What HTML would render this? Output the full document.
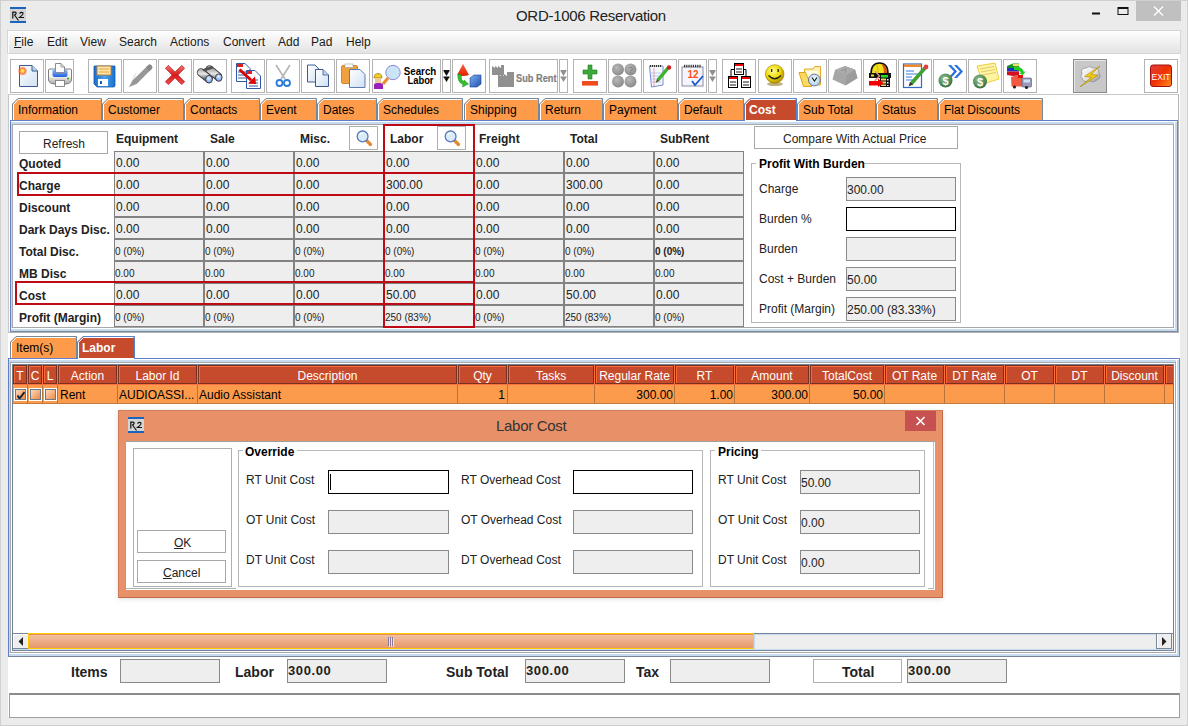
<!DOCTYPE html><html><head><meta charset="utf-8"><style>
*{margin:0;padding:0;box-sizing:border-box}
html,body{width:1188px;height:726px;overflow:hidden}
body{position:relative;background:#ebebeb;font-family:"Liberation Sans",sans-serif;font-size:12px;color:#000}
body div{position:absolute}
.t{white-space:nowrap;line-height:14px}
.b{font-weight:bold}
.tab{height:22px;background:#fa9a4a;border:1px solid #7d8ea6;border-bottom:none;}
</style></head><body>
<div style="left:0px;top:0px;width:1188px;height:726px;border:1px solid #cfcfcf;background:#ebebeb"></div>
<div class="t" style="left:516px;top:7px;font-size:15px;line-height:18px;letter-spacing:-0.3px;color:#222">ORD-1006 Reservation</div>
<div style="left:8px;top:30px;width:1172px;height:687px;background:#fff"></div>
<div style="left:7px;top:30px;width:1174px;height:24px;background:linear-gradient(#fefefe,#e3e3e3);border:1px solid #d6d6d6;box-shadow:inset 1px 1px 0 #fff"></div>
<div class="t" style="left:14px;top:35px;color:#1a1a1a"><u>F</u>ile</div>
<div class="t" style="left:47px;top:35px;color:#1a1a1a">Edit</div>
<div class="t" style="left:80px;top:35px;color:#1a1a1a">View</div>
<div class="t" style="left:119px;top:35px;color:#1a1a1a">Search</div>
<div class="t" style="left:170px;top:35px;color:#1a1a1a">Actions</div>
<div class="t" style="left:223px;top:35px;color:#1a1a1a">Convert</div>
<div class="t" style="left:278px;top:35px;color:#1a1a1a">Add</div>
<div class="t" style="left:311px;top:35px;color:#1a1a1a">Pad</div>
<div class="t" style="left:346px;top:35px;color:#1a1a1a">Help</div>
<div style="left:10px;top:59px;width:34px;height:34px;border:1px solid #b4b4b4;background:#fff"></div>
<div style="left:45px;top:59px;width:29px;height:34px;border:1px solid #b4b4b4;background:#fff"></div>
<div style="left:88px;top:59px;width:34px;height:34px;border:1px solid #b4b4b4;background:#fff"></div>
<div style="left:123px;top:59px;width:34px;height:34px;border:1px solid #b4b4b4;background:#fff"></div>
<div style="left:158px;top:59px;width:34px;height:34px;border:1px solid #b4b4b4;background:#fff"></div>
<div style="left:193px;top:59px;width:34px;height:34px;border:1px solid #b4b4b4;background:#fff"></div>
<div style="left:231px;top:59px;width:34px;height:34px;border:1px solid #b4b4b4;background:#fff"></div>
<div style="left:266px;top:59px;width:34px;height:34px;border:1px solid #b4b4b4;background:#fff"></div>
<div style="left:301px;top:59px;width:34px;height:34px;border:1px solid #b4b4b4;background:#fff"></div>
<div style="left:336px;top:59px;width:34px;height:34px;border:1px solid #b4b4b4;background:#fff"></div>
<div style="left:372px;top:59px;width:69px;height:34px;border:1px solid #b4b4b4;background:#fff"></div>
<div style="left:442px;top:59px;width:9px;height:34px;border:1px solid #b4b4b4;background:#fff"></div>
<div style="left:452px;top:59px;width:34px;height:34px;border:1px solid #b4b4b4;background:#fff"></div>
<div style="left:489px;top:59px;width:69px;height:34px;border:1px solid #b4b4b4;background:#fff"></div>
<div style="left:559px;top:59px;width:9px;height:34px;border:1px solid #b4b4b4;background:#fff"></div>
<div style="left:573px;top:59px;width:34px;height:34px;border:1px solid #b4b4b4;background:#fff"></div>
<div style="left:608px;top:59px;width:34px;height:34px;border:1px solid #b4b4b4;background:#fff"></div>
<div style="left:643px;top:59px;width:34px;height:34px;border:1px solid #b4b4b4;background:#fff"></div>
<div style="left:678px;top:59px;width:29px;height:34px;border:1px solid #b4b4b4;background:#fff"></div>
<div style="left:708px;top:59px;width:9px;height:34px;border:1px solid #b4b4b4;background:#fff"></div>
<div style="left:722px;top:59px;width:34px;height:34px;border:1px solid #b4b4b4;background:#fff"></div>
<div style="left:758px;top:59px;width:34px;height:34px;border:1px solid #b4b4b4;background:#fff"></div>
<div style="left:793px;top:59px;width:34px;height:34px;border:1px solid #b4b4b4;background:#fff"></div>
<div style="left:828px;top:59px;width:34px;height:34px;border:1px solid #b4b4b4;background:#fff"></div>
<div style="left:863px;top:59px;width:34px;height:34px;border:1px solid #b4b4b4;background:#fff"></div>
<div style="left:898px;top:59px;width:34px;height:34px;border:1px solid #b4b4b4;background:#fff"></div>
<div style="left:933px;top:59px;width:34px;height:34px;border:1px solid #b4b4b4;background:#fff"></div>
<div style="left:968px;top:59px;width:34px;height:34px;border:1px solid #b4b4b4;background:#fff"></div>
<div style="left:1003px;top:59px;width:34px;height:34px;border:1px solid #b4b4b4;background:#fff"></div>
<div style="left:1073px;top:59px;width:34px;height:34px;border:1px solid #8a8a8a;background:#c8c8c8;box-shadow:inset 1px 1px 0 #e8e8e8"></div>
<div style="left:1144px;top:59px;width:34px;height:34px;border:1px solid #b4b4b4;background:#fff"></div>
<svg style="position:absolute;left:0;top:0" width="1188" height="96" viewBox="0 0 1188 96">
<defs>
<linearGradient id="pg" x1="0" y1="0" x2="1" y2="1"><stop offset="0" stop-color="#ffffff"/><stop offset="1" stop-color="#cfe0f3"/></linearGradient>
<radialGradient id="star" cx="0.5" cy="0.5" r="0.5"><stop offset="0" stop-color="#ffe040"/><stop offset="0.5" stop-color="#ff8020"/><stop offset="1" stop-color="#ff4040" stop-opacity="0.2"/></radialGradient>
<linearGradient id="redx" x1="0" y1="0" x2="0" y2="1"><stop offset="0" stop-color="#f07a7a"/><stop offset="0.5" stop-color="#d81818"/><stop offset="1" stop-color="#f05050"/></linearGradient>
<linearGradient id="flop" x1="0" y1="0" x2="1" y2="0"><stop offset="0" stop-color="#1a6fd0"/><stop offset="0.5" stop-color="#4aa0ec"/><stop offset="1" stop-color="#1a70cc"/></linearGradient>
<radialGradient id="smile" cx="0.4" cy="0.35" r="0.65"><stop offset="0" stop-color="#ffff90"/><stop offset="0.6" stop-color="#f0d800"/><stop offset="1" stop-color="#b09000"/></radialGradient>
<radialGradient id="coin" cx="0.4" cy="0.35" r="0.7"><stop offset="0" stop-color="#8fc08f"/><stop offset="1" stop-color="#2f6f3a"/></radialGradient>
<linearGradient id="exitg" x1="0" y1="0" x2="1" y2="1"><stop offset="0" stop-color="#e04040"/><stop offset="0.5" stop-color="#f03000"/><stop offset="1" stop-color="#ff9020"/></linearGradient>
<radialGradient id="gcirc" cx="0.4" cy="0.35" r="0.7"><stop offset="0" stop-color="#b8b8b8"/><stop offset="1" stop-color="#888"/></radialGradient>
<linearGradient id="prb" x1="0" y1="0" x2="0" y2="1"><stop offset="0" stop-color="#ffffff"/><stop offset="0.5" stop-color="#f4f0ea"/><stop offset="1" stop-color="#a8a8a8"/></linearGradient>
<linearGradient id="prt" x1="0" y1="0" x2="0" y2="1"><stop offset="0" stop-color="#90c0ff"/><stop offset="1" stop-color="#1a60e0"/></linearGradient>
<linearGradient id="bin" x1="0" y1="0" x2="0" y2="1"><stop offset="0" stop-color="#b0b0b0"/><stop offset="0.5" stop-color="#e8e8e8"/><stop offset="1" stop-color="#707070"/></linearGradient>
<radialGradient id="lens" cx="0.45" cy="0.35" r="0.65"><stop offset="0" stop-color="#e8f2ff"/><stop offset="0.5" stop-color="#a8c8f8"/><stop offset="1" stop-color="#6898e0"/></radialGradient>
<linearGradient id="cloud" x1="0" y1="0" x2="1" y2="1"><stop offset="0" stop-color="#ffffff"/><stop offset="0.55" stop-color="#e4e4e4"/><stop offset="1" stop-color="#8a8a8a"/></linearGradient>
<radialGradient id="clk" cx="0.45" cy="0.4" r="0.6"><stop offset="0" stop-color="#f4fbff"/><stop offset="1" stop-color="#a8d4f0"/></radialGradient>
<linearGradient id="cube" x1="0" y1="0" x2="1" y2="1"><stop offset="0" stop-color="#7ab0f0"/><stop offset="1" stop-color="#2050b0"/></linearGradient>
<linearGradient id="cone" x1="0" y1="0" x2="0" y2="1"><stop offset="0" stop-color="#ff6040"/><stop offset="1" stop-color="#e02000"/></linearGradient>
</defs>
<path d="M19.5 65.5 H32 L37.5 71 V86.5 H19.5 Z" fill="url(#pg)" stroke="#3c5a92" stroke-width="1"/>
<path d="M32 65.5 V71 H37.5" fill="#bcd4ee" stroke="#3c5a92" stroke-width="1"/>
<circle cx="22.5" cy="71" r="4.6" fill="url(#star)"/><circle cx="22.5" cy="71" r="2" fill="#ffe060"/>
<path d="M48.5 70 Q48.5 69 50 69 H70 Q71.5 69 71.5 70 V79 Q71.5 83.5 66 84 H54 Q48.5 83.5 48.5 79 Z" fill="url(#prb)" stroke="#707070" stroke-width="0.9"/>
<path d="M52.5 69.5 H67.5 V74.5 Q67.5 77 65 77 H55 Q52.5 77 52.5 74.5 Z" fill="url(#prt)"/>
<path d="M55.5 63.5 H61 L64.5 67 V72.5 H55.5 Z" fill="#fff" stroke="#808080" stroke-width="0.9"/>
<path d="M61 63.5 V67 H64.5" fill="none" stroke="#808080" stroke-width="0.8"/>
<rect x="55" y="72" width="10" height="1.5" fill="#8a8aa0"/>
<rect x="55.5" y="80.5" width="9" height="6" fill="#fff" stroke="#808080" stroke-width="0.9"/>
<circle cx="68" cy="78.5" r="1" fill="#20a020"/>
<path d="M94 66 H115 V85.5 Q115 87 113.5 87 H97 L94 84 Z" fill="url(#flop)" stroke="#1a5cb0" stroke-width="0.8"/>
<rect x="97" y="66" width="14" height="9" fill="#fbe6b0" stroke="#b8803a" stroke-width="1"/>
<line x1="99" y1="69" x2="109" y2="69" stroke="#f0a030" stroke-width="1"/><line x1="99" y1="72" x2="109" y2="72" stroke="#f0a030" stroke-width="1"/>
<rect x="98" y="79" width="10" height="7" fill="#fff"/><rect x="100" y="81" width="2" height="3" fill="#1a60c0"/>
<path d="M131 84 Q132 75 137 71 L135 79 Z" fill="#ececec"/>
<g transform="translate(-0.7 0.7)"><path d="M148.6 64.7 Q150.5 63 152.3 64.8 Q154 66.8 152.3 68.3 L137.3 83.3 L129.6 86.4 L133.2 79.9 Z" fill="#979797"/>
<path d="M148.6 64.7 Q150.5 63 152.3 64.8 Q154 66.8 152.3 68.3 L150.3 70.3 L146.6 66.7 Z" fill="#8a8a8a"/></g>
<path d="M166.5 69 L169 66.5 L175 72.5 L181 66.5 L183.5 69 L177.5 75 L183.5 81 L181 83.5 L175 77.5 L169 83.5 L166.5 81 L172.5 75 Z" fill="url(#redx)" stroke="#c02020" stroke-width="0.8" transform="translate(175 75) scale(1.12) translate(-175 -75)"/>
<path d="M201 72.5 L208.5 78.5 M209.5 69.5 L218 76.5" stroke="#3a3a3a" stroke-width="8.4" stroke-linecap="round"/>
<path d="M201 72.5 L208.5 78.5 M209.5 69.5 L218 76.5" stroke="url(#bin)" stroke-width="6.6" stroke-linecap="round"/>
<path d="M204 70 L212 67.5" stroke="#505050" stroke-width="2.5" stroke-linecap="round"/>
<ellipse cx="209" cy="79.3" rx="3.4" ry="3.8" fill="url(#lens)" stroke="#333" stroke-width="0.9"/>
<ellipse cx="218.8" cy="77.6" rx="3.3" ry="3.7" fill="url(#lens)" stroke="#333" stroke-width="0.9"/>
<path d="M236.5 63.5 H245 L250 68.5 V81.5 H236.5 Z" fill="#fff" stroke="#2f5aa8" stroke-width="1"/>
<rect x="237" y="64" width="6" height="3" fill="#e02020"/>
<line x1="238" y1="72" x2="246" y2="72" stroke="#2f5aa8"/><line x1="238" y1="75" x2="246" y2="75" stroke="#2f5aa8"/><line x1="238" y1="78" x2="246" y2="78" stroke="#2f5aa8"/>
<path d="M246.5 70.5 H255 L260.5 76 V88.5 H246.5 Z" fill="#fff" stroke="#2f5aa8" stroke-width="1"/>
<rect x="247" y="71" width="5" height="3" fill="#e02020"/>
<line x1="249" y1="80" x2="258" y2="80" stroke="#2f5aa8"/><line x1="249" y1="83" x2="258" y2="83" stroke="#2f5aa8"/><line x1="249" y1="86" x2="258" y2="86" stroke="#2f5aa8"/>
<line x1="239.5" y1="69.5" x2="251" y2="80" stroke="#e00000" stroke-width="3"/><path d="M248 83.5 L256 84 L255 76.5 Z" fill="#e00000"/>
<path d="M276 65 L285 79 M290 65 L281 79" stroke="#b8b8b8" stroke-width="1.8" fill="none"/>
<circle cx="279.5" cy="83" r="3" fill="none" stroke="#2a7ad8" stroke-width="1.8"/><circle cx="287" cy="83" r="3" fill="none" stroke="#2a7ad8" stroke-width="1.8"/>
<path d="M307.5 65 H315 L320.5 70.5 V82 H307.5 Z" fill="url(#pg)" stroke="#3c5a92" stroke-width="1"/>
<path d="M315.5 69.5 H323 L328.5 75 V86.5 H315.5 Z" fill="url(#pg)" stroke="#3c5a92" stroke-width="1"/>
<path d="M323 69.5 V75 H328.5" fill="#bcd4ee" stroke="#3c5a92" stroke-width="0.8"/>
<rect x="341.5" y="65.5" width="16" height="18" rx="1.5" fill="#f0a040" stroke="#c07820" stroke-width="0.8"/>
<rect x="345" y="64" width="8" height="3.5" fill="#fff" stroke="#999" stroke-width="0.6"/>
<path d="M349.5 69.5 H360 L365 74.5 V87.5 H349.5 Z" fill="url(#pg)" stroke="#5a7ab2" stroke-width="1"/>
<circle cx="393" cy="72.5" r="7.2" fill="#c8e4f6" stroke="#8a8ad8" stroke-width="1"/>
<line x1="388" y1="78" x2="383" y2="84" stroke="#f08a30" stroke-width="3"/>
<path d="M374 78 Q374 73.5 378 73.5 Q382 73.5 382 78 Z" fill="#f0d020" stroke="#806000" stroke-width="0.6"/>
<rect x="375" y="78" width="6" height="5" fill="#f0c8a0"/>
<path d="M374 89 V85 Q374 83 377 83 H380 Q383 83 383 85 V89 Z" fill="#9a20b8"/>
<text x="420" y="75" text-anchor="middle" font-family="Liberation Sans" font-weight="bold" font-size="10" textLength="32.5" lengthAdjust="spacingAndGlyphs">Search</text>
<text x="420.5" y="84" text-anchor="middle" font-family="Liberation Sans" font-weight="bold" font-size="10" textLength="26" lengthAdjust="spacingAndGlyphs">Labor</text>
<path d="M443.5 71 H449.5 L446.5 76 Z" fill="#111"/><rect x="443.5" y="70" width="6" height="1" fill="#111"/><path d="M443.5 77 H449.5 L446.5 82 Z" fill="#111"/><rect x="443.5" y="76.5" width="6" height="1" fill="#111"/>
<path d="M560.5 71 H566.5 L563.5 76 Z" fill="#909090"/><rect x="560.5" y="70" width="6" height="1" fill="#909090"/><path d="M560.5 77 H566.5 L563.5 82 Z" fill="#909090"/><rect x="560.5" y="76.5" width="6" height="1" fill="#909090"/>
<path d="M709.5 71 H715.5 L712.5 76 Z" fill="#909090"/><rect x="709.5" y="70" width="6" height="1" fill="#909090"/><path d="M709.5 77 H715.5 L712.5 82 Z" fill="#909090"/><rect x="709.5" y="76.5" width="6" height="1" fill="#909090"/>
<path d="M463 64 L457 75 Q463 77 469 75 Z" fill="url(#cone)"/>
<path d="M458 74 Q457 82 463 84.5 L462.5 87 L468.5 84 L464 80 L464 82 Q460.5 80 461.5 75 Z" fill="#30c030" stroke="#208020" stroke-width="0.5"/>
<path d="M470 78 L474 75 H481 V84 L477 87 H470 Z" fill="url(#cube)" stroke="#1a3a90" stroke-width="0.6"/>
<path d="M492 66 L495 68 V66 L498 68 V66 L501 68 V65 H504 V75 H492 Z" fill="#909090"/>
<path d="M498 74 L501 76 V74 L504 76 V74 L507 76 V72 H514 V87 H498 Z" fill="#909090"/>
<path d="M588 65 H592 V70 H597 V74 H592 V79 H588 V74 H583 V70 H588 Z" fill="#3aa83a" stroke="#208020" stroke-width="0.6"/>
<rect x="582" y="81" width="16" height="4.6" fill="#f04a20"/>
<circle cx="618" cy="69.5" r="6" fill="url(#gcirc)"/>
<circle cx="630.5" cy="69.5" r="6" fill="url(#gcirc)"/>
<circle cx="618" cy="81.5" r="6" fill="url(#gcirc)"/>
<circle cx="630.5" cy="81.5" r="6" fill="url(#gcirc)"/>
<text x="630.5" y="73" text-anchor="middle" font-family="Liberation Sans" font-size="9" fill="#777">?</text>
<path d="M649.5 66 H663 V85 L651.5 87 Z" fill="#f4f8ff" stroke="#7a8ad0" stroke-width="1"/>
<path d="M651 73 H661 M651 76 H661 M651 79 H661 M651 82 H661" stroke="#a8c8f0" stroke-width="0.8"/>
<line x1="654" y1="68" x2="654" y2="86" stroke="#f08080" stroke-width="0.7"/>
<path d="M650 66 H662" stroke="#333" stroke-width="2" stroke-dasharray="1 1"/>
<line x1="658" y1="80" x2="668" y2="68" stroke="#40b030" stroke-width="3.5"/><circle cx="669" cy="67.5" r="2.2" fill="#d02020"/><path d="M655.5 83 L657 79 L659.5 81 Z" fill="#553"/>
<rect x="682" y="67" width="21" height="19" fill="#f4f4fb" stroke="#8a8aa8" stroke-width="1"/>
<path d="M684 66 H701" stroke="#333" stroke-width="2.4" stroke-dasharray="1.2 1"/>
<text x="693" y="78" text-anchor="middle" font-family="Liberation Sans" font-weight="bold" font-size="10" fill="#ff5010">12</text>
<path d="M692 81 L695 85 L703 76" stroke="#1a5ad0" stroke-width="1.8" fill="none"/>
<path d="M731 77 V69.5 H746 V77" fill="none" stroke="#000" stroke-width="1"/>
<rect x="734.5" y="63.5" width="9" height="11" fill="#fff" stroke="#000" stroke-width="1"/>
<rect x="735" y="64" width="8" height="2" fill="#f00000"/>
<path d="M736 69 H742 M736 72 H742" stroke="#000" stroke-width="0.9"/>
<rect x="728.5" y="76.5" width="9" height="11" fill="#fff" stroke="#000" stroke-width="1"/>
<rect x="729" y="77" width="8" height="2" fill="#f00000"/>
<path d="M730 82 H736 M730 85 H736" stroke="#000" stroke-width="0.9"/>
<rect x="741.5" y="76.5" width="9" height="11" fill="#fff" stroke="#000" stroke-width="1"/>
<rect x="742" y="77" width="8" height="2" fill="#f00000"/>
<path d="M743 82 H749 M743 85 H749" stroke="#000" stroke-width="0.9"/>
<ellipse cx="775" cy="84" rx="8" ry="2" fill="#806000" opacity="0.5"/>
<circle cx="774.7" cy="74" r="9.3" fill="url(#smile)" stroke="#a08000" stroke-width="0.6"/>
<rect x="771" y="69" width="1.3" height="3" fill="#222"/><rect x="777.5" y="69" width="1.3" height="3" fill="#222"/>
<path d="M768.5 75.5 Q774.7 82 781 75.5" stroke="#222" stroke-width="1.4" fill="none"/>
<path d="M804.5 69 H813 L814.5 66.5 H820.5 V85 H804.5 Z" fill="#fdf0b0" stroke="#e0a020" stroke-width="0.9"/>
<rect x="806" y="71" width="12" height="12" fill="#fffbe0"/>
<path d="M799 72.5 H805.5 L811.5 86.5 H803.5 Z" fill="#f8dc60" stroke="#e09a10" stroke-width="0.9"/>
<circle cx="814.4" cy="80" r="5.9" fill="url(#clk)" stroke="#686888" stroke-width="0.9"/>
<path d="M812 77.5 L814.4 81 L817 77.5" stroke="#111" stroke-width="1.1" fill="none"/>
<path d="M845 66 L855 69.5 L857.5 78 L845.5 85.5 L832.5 79.5 L835 70 Z" fill="#a6a6a6"/>
<path d="M845 66 L855 69.5 L847 75 L835 70 Z" fill="#acacac"/>
<path d="M847 75 L855 69.5 L857.5 78 L845.5 85.5 Z" fill="#9c9c9c"/>
<path d="M841 71 L846 68.5 M846 68.5 L845 73" stroke="#909090" stroke-width="1" fill="none"/>
<path d="M871 74 Q871 63 879.5 63 Q888 63 888 74 Z" fill="#f2e020" stroke="#111" stroke-width="1.6"/>
<path d="M883 64.5 Q887 66 887 74 H884 Q884 68 882 65 Z" fill="#e05010"/>
<path d="M876 64 Q879 68 878 73" stroke="#c8b000" stroke-width="0.8" fill="none"/>
<rect x="869" y="73" width="22" height="5" fill="#111"/><rect x="871" y="74.5" width="3" height="2" fill="#f0e020"/>
<path d="M875 71 L879.5 76 L874.5 81" stroke="#e89080" stroke-width="1.3" fill="none"/>
<rect x="880" y="74" width="10" height="13" fill="#111"/><rect x="881" y="75" width="7" height="2.5" fill="#20e020"/>
<rect x="881" y="78.5" width="5" height="2" fill="#f0d070"/><rect x="881" y="81.5" width="5" height="2" fill="#f0d070"/><rect x="881" y="84.5" width="5" height="1.5" fill="#f0d070"/>
<rect x="887" y="79" width="1.5" height="1.5" fill="#fff"/><rect x="887" y="82" width="1.5" height="1.5" fill="#fff"/><rect x="887" y="85" width="1.5" height="1" fill="#fff"/>
<path d="M869 81 H878 V78.5 L883.5 83.2 L878 87 V85.5 H869 Z" fill="#f00000"/>
<rect x="903.5" y="64" width="18" height="23.5" fill="#fff" stroke="#2f6ac8" stroke-width="1.2"/>
<rect x="904" y="64.5" width="17" height="2.5" fill="#f08a30"/>
<path d="M906 71 H914 M906 74 H918 M906 77 H912 M906 80 H914" stroke="#3a7ad8" stroke-width="1"/>
<line x1="911" y1="84" x2="925" y2="68" stroke="#40a030" stroke-width="3.6"/><circle cx="926" cy="67" r="2.4" fill="#e04040"/><path d="M908.5 86.5 L910 82 L913 84.5 Z" fill="#333"/>
<path d="M948 65 L954 71.5 L948 78 L951 78 L957 71.5 L951 65 Z" fill="#2a70e0"/>
<path d="M954 65 L960 71.5 L954 78 L957 78 L963 71.5 L957 65 Z" fill="#2a70e0"/>
<circle cx="945.5" cy="80.5" r="7" fill="url(#coin)"/>
<text x="945.5" y="84.5" text-anchor="middle" font-family="Liberation Sans" font-weight="bold" font-size="11" fill="#fff">$</text>
<path d="M977 66 L995 63 L999 79 L983 84 Z" fill="#fff4a0" stroke="#e8c020" stroke-width="0.8"/>
<path d="M980 69 L994 66.5 M981 72 L995 69.5 M982 75 L996 72.5" stroke="#d8c060" stroke-width="0.8"/>
<circle cx="980" cy="81.5" r="7" fill="url(#coin)"/>
<text x="980" y="85.5" text-anchor="middle" font-family="Liberation Sans" font-weight="bold" font-size="11" fill="#fff">$</text>
<path d="M1007 66 L1013 63.5 H1019 L1019 68 H1007 Z" fill="#109020"/>
<path d="M1007 68 H1019 V71.5 H1007 Z" fill="#1a30c0"/>
<path d="M1007 71.5 H1019 V75.5 L1013 76 L1007 75 Z" fill="#d01020"/>
<ellipse cx="1016" cy="65" rx="3.5" ry="1.3" fill="#f0e070"/>
<path d="M1014 67 Q1022 66 1024 72 L1026 71 L1023 75 L1019 73.5 L1021 72.5 Q1019 69.5 1014 70 Z" fill="#20d020"/>
<path d="M1011 77 L1018 75 H1022 V86.5 H1011.5 Z" fill="#f05a40"/>
<rect x="1018" y="75" width="5" height="3" fill="#e01010"/>
<rect x="1022" y="78" width="9.5" height="9" rx="1" fill="#9a9ab8" stroke="#505070" stroke-width="0.6"/><rect x="1023.5" y="79.5" width="6.5" height="3" fill="#c8e0f8"/>
<circle cx="1014.5" cy="87" r="1.6" fill="#222"/><circle cx="1026.5" cy="87.5" r="1.6" fill="#222"/>
<path d="M1082 74 Q1080 68 1086 68 Q1089 65 1093 68 Q1099 67 1099 73 Q1102 77 1097 80 Q1094 83 1089 81 Q1083 83 1082 78 Q1079 76 1082 74 Z" fill="url(#cloud)" stroke="#888" stroke-width="0.7"/>
<path d="M1100 66 L1084.5 76.5 L1091.5 77.2 L1080 86.8 L1098 75.2 L1091.2 74.6 Z" fill="#f6cc10" stroke="#a88400" stroke-width="0.6"/>
<rect x="1150.5" y="65" width="21" height="21.5" rx="2.5" fill="url(#exitg)" stroke="#a01010" stroke-width="1"/>
<text x="1161" y="80" text-anchor="middle" font-family="Liberation Sans" font-size="8.5" fill="#fff" textLength="19" lengthAdjust="spacingAndGlyphs">EXIT</text>
<rect x="10" y="7" width="16" height="16" fill="#d4d4d4"/><rect x="10" y="7" width="16" height="2" fill="#1a64c0"/><rect x="10" y="21" width="16" height="2" fill="#1a64c0"/>
<path d="M12.8 12 V18.5 M12.2 12.2 H15 Q17 12.5 15.5 14.5 L14 15 M14.5 15 L18.5 20.5" stroke="#111" stroke-width="1.2" fill="none"/>
<path d="M19.5 13.5 Q21.5 11.5 23 13 Q23.5 14.5 19.5 17.5 H24" stroke="#111" stroke-width="1.1" fill="none"/>
<rect x="1092" y="12.5" width="8" height="2" fill="#111"/>
<rect x="1118" y="7.5" width="10" height="7" fill="none" stroke="#111" stroke-width="1"/><rect x="1118" y="7" width="10" height="2" fill="#111"/>
<rect x="1136" y="1" width="45" height="20" fill="#c0c0c0"/>
<path d="M1154 6.5 L1163 15.5 M1163 6.5 L1154 15.5" stroke="#fff" stroke-width="1.3"/>
</svg>
<div style="left:490px;top:60px;width:67px;height:32px;overflow:hidden"><div class="t" style="left:25.5px;top:11px;font-weight:bold;font-size:11px;color:#808080;transform:scaleX(0.84);transform-origin:0 0;-webkit-text-stroke:0.2px #808080">Sub Rent</div></div>
<div style="left:8px;top:94px;width:1171px;height:239px;border-top:1px solid #cfcfcf;border-left:1px solid #cfcfcf;border-right:1px solid #cfcfcf;border-bottom:1px solid #cfcfcf"></div>
<svg style="position:absolute;left:12px;top:98px" width="90" height="22"><path d="M0.5 22 V6 L6 0.5 H89.5 V22" fill="#fd9b4a" stroke="#74889c" stroke-width="1"/><path d="M1.5 22 V6.4 L6.4 1.5 H88.5" fill="none" stroke="#ffffff" stroke-width="1"/></svg>
<div class="t" style="left:18px;top:103px;color:#000;font-weight:normal">Information</div>
<svg style="position:absolute;left:102px;top:98px" width="82" height="22"><path d="M0.5 22 V6 L6 0.5 H81.5 V22" fill="#fd9b4a" stroke="#74889c" stroke-width="1"/><path d="M1.5 22 V6.4 L6.4 1.5 H80.5" fill="none" stroke="#ffffff" stroke-width="1"/></svg>
<div class="t" style="left:108px;top:103px;color:#000;font-weight:normal">Customer</div>
<svg style="position:absolute;left:184px;top:98px" width="76" height="22"><path d="M0.5 22 V6 L6 0.5 H75.5 V22" fill="#fd9b4a" stroke="#74889c" stroke-width="1"/><path d="M1.5 22 V6.4 L6.4 1.5 H74.5" fill="none" stroke="#ffffff" stroke-width="1"/></svg>
<div class="t" style="left:190px;top:103px;color:#000;font-weight:normal">Contacts</div>
<svg style="position:absolute;left:260px;top:98px" width="57" height="22"><path d="M0.5 22 V6 L6 0.5 H56.5 V22" fill="#fd9b4a" stroke="#74889c" stroke-width="1"/><path d="M1.5 22 V6.4 L6.4 1.5 H55.5" fill="none" stroke="#ffffff" stroke-width="1"/></svg>
<div class="t" style="left:266px;top:103px;color:#000;font-weight:normal">Event</div>
<svg style="position:absolute;left:317px;top:98px" width="60" height="22"><path d="M0.5 22 V6 L6 0.5 H59.5 V22" fill="#fd9b4a" stroke="#74889c" stroke-width="1"/><path d="M1.5 22 V6.4 L6.4 1.5 H58.5" fill="none" stroke="#ffffff" stroke-width="1"/></svg>
<div class="t" style="left:323px;top:103px;color:#000;font-weight:normal">Dates</div>
<svg style="position:absolute;left:377px;top:98px" width="86" height="22"><path d="M0.5 22 V6 L6 0.5 H85.5 V22" fill="#fd9b4a" stroke="#74889c" stroke-width="1"/><path d="M1.5 22 V6.4 L6.4 1.5 H84.5" fill="none" stroke="#ffffff" stroke-width="1"/></svg>
<div class="t" style="left:383px;top:103px;color:#000;font-weight:normal">Schedules</div>
<svg style="position:absolute;left:464px;top:98px" width="75" height="22"><path d="M0.5 22 V6 L6 0.5 H74.5 V22" fill="#fd9b4a" stroke="#74889c" stroke-width="1"/><path d="M1.5 22 V6.4 L6.4 1.5 H73.5" fill="none" stroke="#ffffff" stroke-width="1"/></svg>
<div class="t" style="left:470px;top:103px;color:#000;font-weight:normal">Shipping</div>
<svg style="position:absolute;left:539px;top:98px" width="64" height="22"><path d="M0.5 22 V6 L6 0.5 H63.5 V22" fill="#fd9b4a" stroke="#74889c" stroke-width="1"/><path d="M1.5 22 V6.4 L6.4 1.5 H62.5" fill="none" stroke="#ffffff" stroke-width="1"/></svg>
<div class="t" style="left:545px;top:103px;color:#000;font-weight:normal">Return</div>
<svg style="position:absolute;left:603px;top:98px" width="75" height="22"><path d="M0.5 22 V6 L6 0.5 H74.5 V22" fill="#fd9b4a" stroke="#74889c" stroke-width="1"/><path d="M1.5 22 V6.4 L6.4 1.5 H73.5" fill="none" stroke="#ffffff" stroke-width="1"/></svg>
<div class="t" style="left:609px;top:103px;color:#000;font-weight:normal">Payment</div>
<svg style="position:absolute;left:678px;top:98px" width="66" height="22"><path d="M0.5 22 V6 L6 0.5 H65.5 V22" fill="#fd9b4a" stroke="#74889c" stroke-width="1"/><path d="M1.5 22 V6.4 L6.4 1.5 H64.5" fill="none" stroke="#ffffff" stroke-width="1"/></svg>
<div class="t" style="left:684px;top:103px;color:#000;font-weight:normal">Default</div>
<svg style="position:absolute;left:744px;top:98px" width="53" height="22"><path d="M0.5 22 V6 L6 0.5 H52.5 V22" fill="#c64b2c" stroke="#5a82c8" stroke-width="1"/><path d="M1.5 22 V6.4 L6.4 1.5 H51.5" fill="none" stroke="#ffffff" stroke-width="1"/></svg>
<div class="t" style="left:749px;top:103px;color:#fff;font-weight:bold">Cost</div>
<svg style="position:absolute;left:797px;top:98px" width="79" height="22"><path d="M0.5 22 V6 L6 0.5 H78.5 V22" fill="#fd9b4a" stroke="#74889c" stroke-width="1"/><path d="M1.5 22 V6.4 L6.4 1.5 H77.5" fill="none" stroke="#ffffff" stroke-width="1"/></svg>
<div class="t" style="left:803px;top:103px;color:#000;font-weight:normal">Sub Total</div>
<svg style="position:absolute;left:876px;top:98px" width="62" height="22"><path d="M0.5 22 V6 L6 0.5 H61.5 V22" fill="#fd9b4a" stroke="#74889c" stroke-width="1"/><path d="M1.5 22 V6.4 L6.4 1.5 H60.5" fill="none" stroke="#ffffff" stroke-width="1"/></svg>
<div class="t" style="left:882px;top:103px;color:#000;font-weight:normal">Status</div>
<svg style="position:absolute;left:938px;top:98px" width="105" height="22"><path d="M0.5 22 V6 L6 0.5 H104.5 V22" fill="#fd9b4a" stroke="#74889c" stroke-width="1"/><path d="M1.5 22 V6.4 L6.4 1.5 H103.5" fill="none" stroke="#ffffff" stroke-width="1"/></svg>
<div class="t" style="left:944px;top:103px;color:#000;font-weight:normal">Flat Discounts</div>
<div style="left:8px;top:94px;width:1171px;height:239px;border:1px solid #c8c8c8;border-right-color:#b4b4b4;border-bottom-color:#b4b4b4"></div>
<div style="left:10px;top:120px;width:1168px;height:212px;border-top:1px solid #5f80c8;border-left:1px solid #5f80c8;border-right:1px solid #78889a;border-bottom:1px solid #78889a;background:#c6daf0"></div>
<div style="left:11px;top:121px;width:1166px;height:1px;background:#fff"></div>
<div style="left:1174px;top:122px;width:1px;height:207px;background:#fff"></div>
<div style="left:11px;top:328px;width:1164px;height:1px;background:#fff"></div>
<div style="left:12px;top:124px;width:1162px;height:204px;border:1px solid #a8a8a8;background:#fff"></div>
<div style="left:745px;top:120px;width:51px;height:1px;background:#fff"></div>
<div style="left:19px;top:131px;width:89px;height:23px;border:1px solid #a8a8a8;background:#fff"></div>
<div class="t" style="left:43px;top:137px;color:#222">Refresh</div>
<div class="t" style="left:116px;top:132px;font-weight:bold;color:#222">Equipment</div>
<div class="t" style="left:210px;top:132px;font-weight:bold;color:#222">Sale</div>
<div class="t" style="left:300px;top:132px;font-weight:bold;color:#222">Misc.</div>
<div class="t" style="left:390px;top:132px;font-weight:bold;color:#222">Labor</div>
<div class="t" style="left:479px;top:132px;font-weight:bold;color:#222">Freight</div>
<div class="t" style="left:570px;top:132px;font-weight:bold;color:#222">Total</div>
<div class="t" style="left:660px;top:132px;font-weight:bold;color:#222">SubRent</div>
<div style="left:349px;top:126px;width:29px;height:24px;border:1px solid #b0b0b0;background:#fff"></div>
<svg style="position:absolute;left:356px;top:130px" width="17" height="17"><line x1="10" y1="10" x2="14.5" y2="14.5" stroke="#e08a30" stroke-width="3.2" stroke-linecap="round"/><circle cx="6.6" cy="6.4" r="5.4" fill="#d8ecfa" stroke="#5a7ab8" stroke-width="1.3"/><path d="M3.5 5 Q5 3 7.5 3.2" stroke="#fff" stroke-width="1.2" fill="none"/></svg>
<div style="left:437px;top:126px;width:29px;height:24px;border:1px solid #b0b0b0;background:#fff"></div>
<svg style="position:absolute;left:444px;top:130px" width="17" height="17"><line x1="10" y1="10" x2="14.5" y2="14.5" stroke="#e08a30" stroke-width="3.2" stroke-linecap="round"/><circle cx="6.6" cy="6.4" r="5.4" fill="#d8ecfa" stroke="#5a7ab8" stroke-width="1.3"/><path d="M3.5 5 Q5 3 7.5 3.2" stroke="#fff" stroke-width="1.2" fill="none"/></svg>
<div class="t" style="left:19px;top:157px;font-weight:bold;color:#222">Quoted</div>
<div class="t" style="left:19px;top:179px;font-weight:bold;color:#222">Charge</div>
<div class="t" style="left:19px;top:201px;font-weight:bold;color:#222">Discount</div>
<div class="t" style="left:19px;top:223px;font-weight:bold;color:#222">Dark Days Disc.</div>
<div class="t" style="left:19px;top:245px;font-weight:bold;color:#222">Total Disc.</div>
<div class="t" style="left:19px;top:267px;font-weight:bold;color:#222">MB Disc</div>
<div class="t" style="left:19px;top:289px;font-weight:bold;color:#222">Cost</div>
<div class="t" style="left:19px;top:311px;font-weight:bold;color:#222">Profit (Margin)</div>
<div style="left:114px;top:151px;width:90px;height:22px;border:1px solid #828282;background:#eeeeee"></div>
<div class="t" style="left:116px;top:156px;color:#222">0.00</div>
<div style="left:204px;top:151px;width:90px;height:22px;border:1px solid #828282;background:#eeeeee"></div>
<div class="t" style="left:206px;top:156px;color:#222">0.00</div>
<div style="left:294px;top:151px;width:90px;height:22px;border:1px solid #828282;background:#eeeeee"></div>
<div class="t" style="left:296px;top:156px;color:#222">0.00</div>
<div style="left:384px;top:151px;width:90px;height:22px;border:1px solid #828282;background:#eeeeee"></div>
<div class="t" style="left:386px;top:156px;color:#222">0.00</div>
<div style="left:474px;top:151px;width:90px;height:22px;border:1px solid #828282;background:#eeeeee"></div>
<div class="t" style="left:476px;top:156px;color:#222">0.00</div>
<div style="left:564px;top:151px;width:90px;height:22px;border:1px solid #828282;background:#eeeeee"></div>
<div class="t" style="left:566px;top:156px;color:#222">0.00</div>
<div style="left:654px;top:151px;width:90px;height:22px;border:1px solid #828282;background:#eeeeee"></div>
<div class="t" style="left:656px;top:156px;color:#222">0.00</div>
<div style="left:114px;top:173px;width:90px;height:22px;border:1px solid #828282;background:#eeeeee"></div>
<div class="t" style="left:116px;top:178px;color:#222">0.00</div>
<div style="left:204px;top:173px;width:90px;height:22px;border:1px solid #828282;background:#eeeeee"></div>
<div class="t" style="left:206px;top:178px;color:#222">0.00</div>
<div style="left:294px;top:173px;width:90px;height:22px;border:1px solid #828282;background:#eeeeee"></div>
<div class="t" style="left:296px;top:178px;color:#222">0.00</div>
<div style="left:384px;top:173px;width:90px;height:22px;border:1px solid #828282;background:#eeeeee"></div>
<div class="t" style="left:386px;top:178px;color:#222">300.00</div>
<div style="left:474px;top:173px;width:90px;height:22px;border:1px solid #828282;background:#eeeeee"></div>
<div class="t" style="left:476px;top:178px;color:#222">0.00</div>
<div style="left:564px;top:173px;width:90px;height:22px;border:1px solid #828282;background:#eeeeee"></div>
<div class="t" style="left:566px;top:178px;color:#222">300.00</div>
<div style="left:654px;top:173px;width:90px;height:22px;border:1px solid #828282;background:#eeeeee"></div>
<div class="t" style="left:656px;top:178px;color:#222">0.00</div>
<div style="left:114px;top:195px;width:90px;height:22px;border:1px solid #828282;background:#eeeeee"></div>
<div class="t" style="left:116px;top:200px;color:#222">0.00</div>
<div style="left:204px;top:195px;width:90px;height:22px;border:1px solid #828282;background:#eeeeee"></div>
<div class="t" style="left:206px;top:200px;color:#222">0.00</div>
<div style="left:294px;top:195px;width:90px;height:22px;border:1px solid #828282;background:#eeeeee"></div>
<div class="t" style="left:296px;top:200px;color:#222">0.00</div>
<div style="left:384px;top:195px;width:90px;height:22px;border:1px solid #828282;background:#eeeeee"></div>
<div class="t" style="left:386px;top:200px;color:#222">0.00</div>
<div style="left:474px;top:195px;width:90px;height:22px;border:1px solid #828282;background:#eeeeee"></div>
<div class="t" style="left:476px;top:200px;color:#222">0.00</div>
<div style="left:564px;top:195px;width:90px;height:22px;border:1px solid #828282;background:#eeeeee"></div>
<div class="t" style="left:566px;top:200px;color:#222">0.00</div>
<div style="left:654px;top:195px;width:90px;height:22px;border:1px solid #828282;background:#eeeeee"></div>
<div class="t" style="left:656px;top:200px;color:#222">0.00</div>
<div style="left:114px;top:217px;width:90px;height:22px;border:1px solid #828282;background:#eeeeee"></div>
<div class="t" style="left:116px;top:222px;color:#222">0.00</div>
<div style="left:204px;top:217px;width:90px;height:22px;border:1px solid #828282;background:#eeeeee"></div>
<div class="t" style="left:206px;top:222px;color:#222">0.00</div>
<div style="left:294px;top:217px;width:90px;height:22px;border:1px solid #828282;background:#eeeeee"></div>
<div class="t" style="left:296px;top:222px;color:#222">0.00</div>
<div style="left:384px;top:217px;width:90px;height:22px;border:1px solid #828282;background:#eeeeee"></div>
<div class="t" style="left:386px;top:222px;color:#222">0.00</div>
<div style="left:474px;top:217px;width:90px;height:22px;border:1px solid #828282;background:#eeeeee"></div>
<div class="t" style="left:476px;top:222px;color:#222">0.00</div>
<div style="left:564px;top:217px;width:90px;height:22px;border:1px solid #828282;background:#eeeeee"></div>
<div class="t" style="left:566px;top:222px;color:#222">0.00</div>
<div style="left:654px;top:217px;width:90px;height:22px;border:1px solid #828282;background:#eeeeee"></div>
<div class="t" style="left:656px;top:222px;color:#222">0.00</div>
<div style="left:114px;top:239px;width:90px;height:22px;border:1px solid #828282;background:#eeeeee"></div>
<div class="t" style="left:115px;top:244.5px;font-size:10px;color:#222">0 (0%)</div>
<div style="left:204px;top:239px;width:90px;height:22px;border:1px solid #828282;background:#eeeeee"></div>
<div class="t" style="left:205px;top:244.5px;font-size:10px;color:#222">0 (0%)</div>
<div style="left:294px;top:239px;width:90px;height:22px;border:1px solid #828282;background:#eeeeee"></div>
<div class="t" style="left:295px;top:244.5px;font-size:10px;color:#222">0 (0%)</div>
<div style="left:384px;top:239px;width:90px;height:22px;border:1px solid #828282;background:#eeeeee"></div>
<div class="t" style="left:385px;top:244.5px;font-size:10px;color:#222">0 (0%)</div>
<div style="left:474px;top:239px;width:90px;height:22px;border:1px solid #828282;background:#eeeeee"></div>
<div class="t" style="left:475px;top:244.5px;font-size:10px;color:#222">0 (0%)</div>
<div style="left:564px;top:239px;width:90px;height:22px;border:1px solid #828282;background:#eeeeee"></div>
<div class="t" style="left:565px;top:244.5px;font-size:10px;color:#222">0 (0%)</div>
<div style="left:654px;top:239px;width:90px;height:22px;border:1px solid #828282;background:#eeeeee"></div>
<div class="t" style="left:655px;top:244.5px;font-size:10px;font-weight:bold;color:#222">0 (0%)</div>
<div style="left:114px;top:261px;width:90px;height:22px;border:1px solid #828282;background:#eeeeee"></div>
<div class="t" style="left:115px;top:266.5px;font-size:10px;color:#222">0.00</div>
<div style="left:204px;top:261px;width:90px;height:22px;border:1px solid #828282;background:#eeeeee"></div>
<div class="t" style="left:205px;top:266.5px;font-size:10px;color:#222">0.00</div>
<div style="left:294px;top:261px;width:90px;height:22px;border:1px solid #828282;background:#eeeeee"></div>
<div class="t" style="left:295px;top:266.5px;font-size:10px;color:#222">0.00</div>
<div style="left:384px;top:261px;width:90px;height:22px;border:1px solid #828282;background:#eeeeee"></div>
<div class="t" style="left:385px;top:266.5px;font-size:10px;color:#222">0.00</div>
<div style="left:474px;top:261px;width:90px;height:22px;border:1px solid #828282;background:#eeeeee"></div>
<div class="t" style="left:475px;top:266.5px;font-size:10px;color:#222">0.00</div>
<div style="left:564px;top:261px;width:90px;height:22px;border:1px solid #828282;background:#eeeeee"></div>
<div class="t" style="left:565px;top:266.5px;font-size:10px;color:#222">0.00</div>
<div style="left:654px;top:261px;width:90px;height:22px;border:1px solid #828282;background:#eeeeee"></div>
<div class="t" style="left:655px;top:266.5px;font-size:10px;color:#222">0.00</div>
<div style="left:114px;top:283px;width:90px;height:22px;border:1px solid #828282;background:#eeeeee"></div>
<div class="t" style="left:116px;top:288px;color:#222">0.00</div>
<div style="left:204px;top:283px;width:90px;height:22px;border:1px solid #828282;background:#eeeeee"></div>
<div class="t" style="left:206px;top:288px;color:#222">0.00</div>
<div style="left:294px;top:283px;width:90px;height:22px;border:1px solid #828282;background:#eeeeee"></div>
<div class="t" style="left:296px;top:288px;color:#222">0.00</div>
<div style="left:384px;top:283px;width:90px;height:22px;border:1px solid #828282;background:#eeeeee"></div>
<div class="t" style="left:386px;top:288px;color:#222">50.00</div>
<div style="left:474px;top:283px;width:90px;height:22px;border:1px solid #828282;background:#eeeeee"></div>
<div class="t" style="left:476px;top:288px;color:#222">0.00</div>
<div style="left:564px;top:283px;width:90px;height:22px;border:1px solid #828282;background:#eeeeee"></div>
<div class="t" style="left:566px;top:288px;color:#222">50.00</div>
<div style="left:654px;top:283px;width:90px;height:22px;border:1px solid #828282;background:#eeeeee"></div>
<div class="t" style="left:656px;top:288px;color:#222">0.00</div>
<div style="left:114px;top:305px;width:90px;height:22px;border:1px solid #828282;background:#eeeeee"></div>
<div class="t" style="left:115px;top:310.5px;font-size:10px;color:#222">0 (0%)</div>
<div style="left:204px;top:305px;width:90px;height:22px;border:1px solid #828282;background:#eeeeee"></div>
<div class="t" style="left:205px;top:310.5px;font-size:10px;color:#222">0 (0%)</div>
<div style="left:294px;top:305px;width:90px;height:22px;border:1px solid #828282;background:#eeeeee"></div>
<div class="t" style="left:295px;top:310.5px;font-size:10px;color:#222">0 (0%)</div>
<div style="left:384px;top:305px;width:90px;height:22px;border:1px solid #828282;background:#eeeeee"></div>
<div class="t" style="left:385px;top:310.5px;font-size:10px;color:#222">250 (83%)</div>
<div style="left:474px;top:305px;width:90px;height:22px;border:1px solid #828282;background:#eeeeee"></div>
<div class="t" style="left:475px;top:310.5px;font-size:10px;color:#222">0 (0%)</div>
<div style="left:564px;top:305px;width:90px;height:22px;border:1px solid #828282;background:#eeeeee"></div>
<div class="t" style="left:565px;top:310.5px;font-size:10px;color:#222">250 (83%)</div>
<div style="left:654px;top:305px;width:90px;height:22px;border:1px solid #828282;background:#eeeeee"></div>
<div class="t" style="left:655px;top:310.5px;font-size:10px;color:#222">0 (0%)</div>
<div style="left:17px;top:172px;width:458px;height:24px;border:2px solid #be0a14"></div>
<div style="left:15px;top:281px;width:460px;height:24px;border:2px solid #be0a14"></div>
<div style="left:383px;top:124px;width:92px;height:204px;border:2px solid #be0a14"></div>
<div style="left:754px;top:126px;width:204px;height:23px;border:1px solid #a8a8a8;background:#fff"></div>
<div class="t" style="left:783px;top:132px;color:#222">Compare With Actual Price</div>
<div style="left:751px;top:163px;width:210px;height:160px;border:1px solid #b8b8b8"></div>
<div style="left:756px;top:156px;width:108px;height:14px;background:#fff"></div>
<div class="t" style="left:759px;top:157px;font-weight:bold">Profit With Burden</div>
<div class="t" style="left:759px;top:182px;color:#222">Charge</div>
<div style="left:846px;top:177px;width:110px;height:24px;border:1px solid #8a8a8a;background:#eeeeee"></div>
<div class="t" style="left:847px;top:183px;color:#222">300.00</div>
<div class="t" style="left:759px;top:212px;color:#222">Burden %</div>
<div style="left:846px;top:207px;width:110px;height:24px;border:1px solid #000;background:#fff"></div>
<div class="t" style="left:759px;top:242px;color:#222">Burden</div>
<div style="left:846px;top:237px;width:110px;height:24px;border:1px solid #8a8a8a;background:#eeeeee"></div>
<div class="t" style="left:847px;top:243px;color:#222"></div>
<div class="t" style="left:759px;top:272px;color:#222">Cost + Burden</div>
<div style="left:846px;top:267px;width:110px;height:24px;border:1px solid #8a8a8a;background:#eeeeee"></div>
<div class="t" style="left:847px;top:273px;color:#222">50.00</div>
<div class="t" style="left:759px;top:302px;color:#222">Profit (Margin)</div>
<div style="left:846px;top:297px;width:110px;height:24px;border:1px solid #8a8a8a;background:#eeeeee"></div>
<div class="t" style="left:847px;top:303px;color:#222">250.00 (83.33%)</div>
<svg style="position:absolute;left:10px;top:336px" width="67" height="22"><path d="M0.5 22 V6 L6 0.5 H66.5 V22" fill="#fd9b4a" stroke="#74889c" stroke-width="1"/><path d="M1.5 22 V6.4 L6.4 1.5 H65.5" fill="none" stroke="#fff" stroke-width="1"/></svg>
<div class="t" style="left:16px;top:341px;color:#000;font-weight:normal">Item(s)</div>
<svg style="position:absolute;left:77px;top:336px" width="58" height="22"><path d="M0.5 22 V6 L6 0.5 H57.5 V22" fill="#c64b2c" stroke="#5a82c8" stroke-width="1"/><path d="M1.5 22 V6.4 L6.4 1.5 H56.5" fill="none" stroke="#fff" stroke-width="1"/></svg>
<div class="t" style="left:82px;top:341px;color:#fff;font-weight:bold">Labor</div>
<div style="left:8px;top:358px;width:1172px;height:299px;border-top:1px solid #5f80c8;border-left:1px solid #5f80c8;border-right:1px solid #78889a;border-bottom:1px solid #78889a;background:#c6daf0"></div>
<div style="left:9px;top:359px;width:1170px;height:1px;background:#fff"></div>
<div style="left:1176px;top:360px;width:1px;height:294px;background:#fff"></div>
<div style="left:9px;top:653px;width:1168px;height:1px;background:#fff"></div>
<div style="left:78px;top:358px;width:56px;height:1px;background:#fff"></div>
<div style="left:10px;top:362px;width:1166px;height:291px;border:1px solid #a8a8a8;background:#fff"></div>
<div style="left:11px;top:363px;width:1164px;height:1px;background:#fff"></div>
<div style="left:12px;top:364px;width:1162px;height:287px;border:1px solid #6f8090;background:#fff"></div>
<div style="left:13px;top:365px;width:1160px;height:39px;overflow:hidden;background:#ff7040">
<div style="left:0px;top:0;width:14px;height:19px;background:#c64b2c;border:1px solid #7a3020;box-shadow:inset 1px 1px 0 #f86a36;color:#fff;text-align:center;line-height:21px">T</div>
<div style="left:0px;top:20px;width:15px;height:19px;background:#fb9b4b;border-right:1px solid #b8743a;border-bottom:1px solid #c07a40"></div>
<div style="left:15px;top:0;width:14px;height:19px;background:#c64b2c;border:1px solid #7a3020;box-shadow:inset 1px 1px 0 #f86a36;color:#fff;text-align:center;line-height:21px">C</div>
<div style="left:15px;top:20px;width:15px;height:19px;background:#fb9b4b;border-right:1px solid #b8743a;border-bottom:1px solid #c07a40"></div>
<div style="left:30px;top:0;width:14px;height:19px;background:#c64b2c;border:1px solid #7a3020;box-shadow:inset 1px 1px 0 #f86a36;color:#fff;text-align:center;line-height:21px">L</div>
<div style="left:30px;top:20px;width:15px;height:19px;background:#fb9b4b;border-right:1px solid #b8743a;border-bottom:1px solid #c07a40"></div>
<div style="left:45px;top:0;width:59px;height:19px;background:#c64b2c;border:1px solid #7a3020;box-shadow:inset 1px 1px 0 #f86a36;color:#fff;text-align:center;line-height:21px">Action</div>
<div style="left:45px;top:20px;width:60px;height:19px;background:#fb9b4b;border-right:1px solid #b8743a;border-bottom:1px solid #c07a40"></div>
<div style="left:105px;top:0;width:79px;height:19px;background:#c64b2c;border:1px solid #7a3020;box-shadow:inset 1px 1px 0 #f86a36;color:#fff;text-align:center;line-height:21px">Labor Id</div>
<div style="left:105px;top:20px;width:80px;height:19px;background:#fb9b4b;border-right:1px solid #b8743a;border-bottom:1px solid #c07a40"></div>
<div style="left:185px;top:0;width:259px;height:19px;background:#c64b2c;border:1px solid #7a3020;box-shadow:inset 1px 1px 0 #f86a36;color:#fff;text-align:center;line-height:21px">Description</div>
<div style="left:185px;top:20px;width:260px;height:19px;background:#fb9b4b;border-right:1px solid #b8743a;border-bottom:1px solid #c07a40"></div>
<div style="left:445px;top:0;width:49px;height:19px;background:#c64b2c;border:1px solid #7a3020;box-shadow:inset 1px 1px 0 #f86a36;color:#fff;text-align:center;line-height:21px">Qty</div>
<div style="left:445px;top:20px;width:50px;height:19px;background:#fb9b4b;border-right:1px solid #b8743a;border-bottom:1px solid #c07a40"></div>
<div style="left:495px;top:0;width:86px;height:19px;background:#c64b2c;border:1px solid #7a3020;box-shadow:inset 1px 1px 0 #f86a36;color:#fff;text-align:center;line-height:21px">Tasks</div>
<div style="left:495px;top:20px;width:87px;height:19px;background:#fb9b4b;border-right:1px solid #b8743a;border-bottom:1px solid #c07a40"></div>
<div style="left:582px;top:0;width:79px;height:19px;background:#c64b2c;border:1px solid #7a3020;box-shadow:inset 1px 1px 0 #f86a36;color:#fff;text-align:center;line-height:21px">Regular Rate</div>
<div style="left:582px;top:20px;width:80px;height:19px;background:#fb9b4b;border-right:1px solid #b8743a;border-bottom:1px solid #c07a40"></div>
<div style="left:662px;top:0;width:59px;height:19px;background:#c64b2c;border:1px solid #7a3020;box-shadow:inset 1px 1px 0 #f86a36;color:#fff;text-align:center;line-height:21px">RT</div>
<div style="left:662px;top:20px;width:60px;height:19px;background:#fb9b4b;border-right:1px solid #b8743a;border-bottom:1px solid #c07a40"></div>
<div style="left:722px;top:0;width:74px;height:19px;background:#c64b2c;border:1px solid #7a3020;box-shadow:inset 1px 1px 0 #f86a36;color:#fff;text-align:center;line-height:21px">Amount</div>
<div style="left:722px;top:20px;width:75px;height:19px;background:#fb9b4b;border-right:1px solid #b8743a;border-bottom:1px solid #c07a40"></div>
<div style="left:797px;top:0;width:74px;height:19px;background:#c64b2c;border:1px solid #7a3020;box-shadow:inset 1px 1px 0 #f86a36;color:#fff;text-align:center;line-height:21px">TotalCost</div>
<div style="left:797px;top:20px;width:75px;height:19px;background:#fb9b4b;border-right:1px solid #b8743a;border-bottom:1px solid #c07a40"></div>
<div style="left:872px;top:0;width:59px;height:19px;background:#c64b2c;border:1px solid #7a3020;box-shadow:inset 1px 1px 0 #f86a36;color:#fff;text-align:center;line-height:21px">OT Rate</div>
<div style="left:872px;top:20px;width:60px;height:19px;background:#fb9b4b;border-right:1px solid #b8743a;border-bottom:1px solid #c07a40"></div>
<div style="left:932px;top:0;width:59px;height:19px;background:#c64b2c;border:1px solid #7a3020;box-shadow:inset 1px 1px 0 #f86a36;color:#fff;text-align:center;line-height:21px">DT Rate</div>
<div style="left:932px;top:20px;width:60px;height:19px;background:#fb9b4b;border-right:1px solid #b8743a;border-bottom:1px solid #c07a40"></div>
<div style="left:992px;top:0;width:49px;height:19px;background:#c64b2c;border:1px solid #7a3020;box-shadow:inset 1px 1px 0 #f86a36;color:#fff;text-align:center;line-height:21px">OT</div>
<div style="left:992px;top:20px;width:50px;height:19px;background:#fb9b4b;border-right:1px solid #b8743a;border-bottom:1px solid #c07a40"></div>
<div style="left:1042px;top:0;width:49px;height:19px;background:#c64b2c;border:1px solid #7a3020;box-shadow:inset 1px 1px 0 #f86a36;color:#fff;text-align:center;line-height:21px">DT</div>
<div style="left:1042px;top:20px;width:50px;height:19px;background:#fb9b4b;border-right:1px solid #b8743a;border-bottom:1px solid #c07a40"></div>
<div style="left:1092px;top:0;width:59px;height:19px;background:#c64b2c;border:1px solid #7a3020;box-shadow:inset 1px 1px 0 #f86a36;color:#fff;text-align:center;line-height:21px">Discount</div>
<div style="left:1092px;top:20px;width:60px;height:19px;background:#fb9b4b;border-right:1px solid #b8743a;border-bottom:1px solid #c07a40"></div>
<div style="left:1152px;top:0;width:65px;height:19px;background:#c64b2c;border:1px solid #7a3020;box-shadow:inset 1px 1px 0 #f86a36;color:#fff;text-align:center;line-height:21px"></div>
<div style="left:1152px;top:20px;width:66px;height:19px;background:#fb9b4b;border-right:1px solid #b8743a;border-bottom:1px solid #c07a40"></div>
</div>
<div class="t" style="left:60px;top:388px;">Rent</div>
<div class="t" style="left:119px;top:388px;">AUDIOASSI...</div>
<div class="t" style="left:199px;top:388px;">Audio Assistant</div>
<div class="t" style="left:458px;top:388px;width:47px;text-align:right">1</div>
<div class="t" style="left:595px;top:388px;width:78px;text-align:right">300.00</div>
<div class="t" style="left:675px;top:388px;width:58px;text-align:right">1.00</div>
<div class="t" style="left:735px;top:388px;width:73px;text-align:right">300.00</div>
<div class="t" style="left:810px;top:388px;width:73px;text-align:right">50.00</div>
<div style="left:14px;top:388px;width:13px;height:13px;border:1px solid #fff;box-shadow:inset 0 0 0 1px #6a7a8a;background:linear-gradient(135deg,#fde4c8,#ee8038)"></div>
<svg style="position:absolute;left:17px;top:391px" width="8" height="8"><path d="M0.5 4.5 L2.5 7.5 L7.5 1" stroke="#1a2230" stroke-width="2" fill="none"/></svg>
<div style="left:29px;top:388px;width:13px;height:13px;border:1px solid #fff;box-shadow:inset 0 0 0 1px #6a7a8a;background:linear-gradient(135deg,#fde4c8,#ee8038)"></div>
<div style="left:44px;top:388px;width:13px;height:13px;border:1px solid #fff;box-shadow:inset 0 0 0 1px #6a7a8a;background:linear-gradient(135deg,#fde4c8,#ee8038)"></div>
<div style="left:13px;top:633px;width:1160px;height:18px;background:#eeeeee;border-top:1px solid #78889a;border-bottom:1px solid #78889a"></div>
<div style="left:13px;top:649px;width:1160px;height:1px;background:#c6daf0"></div>
<div style="left:13px;top:634px;width:15px;height:15px;background:#eeeeee;border-bottom:1px solid #78889a;box-shadow:inset 1px 1px 0 #fff"></div>
<svg style="position:absolute;left:18px;top:637px" width="6" height="9"><path d="M5 0 L0.5 4.5 L5 9 Z" fill="#222"/></svg>
<div style="left:28px;top:633px;width:726px;height:16px;border:1px solid #ffc800;box-shadow:inset 0 1px 0 #e89050;background:linear-gradient(#f2c4a4,#e6986a)"></div>
<svg style="position:absolute;left:387px;top:636px" width="8" height="11"><path d="M1.5 1 V10 M3.5 1 V10 M5.5 1 V10" stroke="#8a7a9a" stroke-width="1"/><path d="M2.5 2 V11 M4.5 2 V11 M6.5 2 V11" stroke="#fbe0c8" stroke-width="1"/></svg>
<div style="left:754px;top:634px;width:402px;height:15px;box-shadow:inset 1px 1px 0 #c6daf0"></div>
<div style="left:1156px;top:634px;width:16px;height:15px;background:#eeeeee;border:1px solid #78889a;border-top:none;box-shadow:inset 1px 0 0 #fff"></div>
<svg style="position:absolute;left:1161px;top:637px" width="6" height="9"><path d="M1 0 L5.5 4.5 L1 9 Z" fill="#222"/></svg>
<div style="left:118px;top:410px;width:825px;height:188px;background:#e89068;border:1px solid #d07d58;border-right-color:#c06a48;border-bottom-color:#c06a48;box-shadow:0 1px 5px rgba(0,0,0,0.13)"></div>
<svg style="position:absolute;left:128px;top:417px" width="16" height="16" viewBox="10 7 16 16"><rect x="10" y="7" width="16" height="16" fill="#d4d4d4"/><rect x="10" y="7" width="16" height="2" fill="#1a64c0"/><rect x="10" y="21" width="16" height="2" fill="#1a64c0"/><path d="M12.8 12 V18.5 M12.2 12.2 H15 Q17 12.5 15.5 14.5 L14 15 M14.5 15 L18.5 20.5" stroke="#111" stroke-width="1.2" fill="none"/><path d="M19.5 13.5 Q21.5 11.5 23 13 Q23.5 14.5 19.5 17.5 H24" stroke="#111" stroke-width="1.1" fill="none"/></svg>
<div class="t" style="left:496px;top:417px;font-size:15px;line-height:18px;letter-spacing:-0.3px;color:#333">Labor Cost</div>
<div style="left:905px;top:411px;width:31px;height:20px;background:#c75050"></div>
<svg style="position:absolute;left:905px;top:411px" width="31" height="20"><path d="M11.5 6 L19.5 14 M19.5 6 L11.5 14" stroke="#fff" stroke-width="1.6"/></svg>
<div style="left:125px;top:441px;width:810px;height:149px;background:#fff;border-top:1px solid #a0a0a0;border-left:1px solid #a0a0a0"></div>
<div style="left:933px;top:442px;width:1px;height:147px;background:#c0c0c0"></div>
<div style="left:928px;top:588px;width:6px;height:1px;background:#b8b8b8"></div>
<div style="left:126px;top:588px;width:110px;height:1px;background:#b0b0b0"></div>
<div style="left:133px;top:448px;width:99px;height:139px;border:1px solid #b0b0b0"></div>
<div style="left:137px;top:530px;width:89px;height:23px;border:1px solid #a8a8a8;background:#fff"></div>
<div class="t" style="left:174px;top:536px;color:#222"><u>O</u>K</div>
<div style="left:137px;top:560px;width:89px;height:23px;border:1px solid #a8a8a8;background:#fff"></div>
<div class="t" style="left:163px;top:566px;color:#222"><u>C</u>ancel</div>
<div style="left:238px;top:450px;width:465px;height:137px;border:1px solid #b8b8b8"></div>
<div style="left:243px;top:444px;width:54px;height:14px;background:#fff"></div>
<div class="t" style="left:245px;top:445px;font-weight:bold">Override</div>
<div style="left:710px;top:450px;width:215px;height:137px;border:1px solid #b8b8b8"></div>
<div style="left:715px;top:444px;width:46px;height:14px;background:#fff"></div>
<div class="t" style="left:718px;top:445px;font-weight:bold">Pricing</div>
<div class="t" style="left:246px;top:473px;color:#222">RT Unit Cost</div>
<div class="t" style="left:461px;top:473px;color:#222">RT Overhead Cost</div>
<div class="t" style="left:718px;top:473px;color:#222">RT Unit Cost</div>
<div style="left:328px;top:470px;width:121px;height:24px;border:1px solid #000;background:#fff"></div>
<div style="left:330px;top:474px;width:1px;height:16px;background:#000"></div>
<div style="left:573px;top:470px;width:120px;height:24px;border:1px solid #000;background:#fff"></div>
<div style="left:800px;top:470px;width:120px;height:24px;border:1px solid #8a8a8a;background:#eeeeee"></div>
<div class="t" style="left:801px;top:476px;color:#222">50.00</div>
<div class="t" style="left:246px;top:513px;color:#222">OT Unit Cost</div>
<div class="t" style="left:461px;top:513px;color:#222">OT Overhead Cost</div>
<div class="t" style="left:718px;top:513px;color:#222">OT Unit Cost</div>
<div style="left:328px;top:510px;width:121px;height:24px;border:1px solid #8a8a8a;background:#eeeeee"></div>
<div style="left:573px;top:510px;width:120px;height:24px;border:1px solid #8a8a8a;background:#eeeeee"></div>
<div style="left:800px;top:510px;width:120px;height:24px;border:1px solid #8a8a8a;background:#eeeeee"></div>
<div class="t" style="left:801px;top:516px;color:#222">0.00</div>
<div class="t" style="left:246px;top:553px;color:#222">DT Unit Cost</div>
<div class="t" style="left:461px;top:553px;color:#222">DT Overhead Cost</div>
<div class="t" style="left:718px;top:553px;color:#222">DT Unit Cost</div>
<div style="left:328px;top:550px;width:121px;height:24px;border:1px solid #8a8a8a;background:#eeeeee"></div>
<div style="left:573px;top:550px;width:120px;height:24px;border:1px solid #8a8a8a;background:#eeeeee"></div>
<div style="left:800px;top:550px;width:120px;height:24px;border:1px solid #8a8a8a;background:#eeeeee"></div>
<div class="t" style="left:801px;top:556px;color:#222">0.00</div>
<div class="t" style="left:71px;top:664px;font-weight:bold;font-size:14px;line-height:16px;color:#222">Items</div>
<div class="t" style="left:235px;top:664px;font-weight:bold;font-size:14px;line-height:16px;color:#222">Labor</div>
<div class="t" style="left:446px;top:664px;font-weight:bold;font-size:14px;line-height:16px;color:#222">Sub Total</div>
<div class="t" style="left:636px;top:664px;font-weight:bold;font-size:14px;line-height:16px;color:#222">Tax</div>
<div style="left:120px;top:659px;width:100px;height:24px;border:1px solid #8a8a8a;background:#eeeeee"></div>
<div style="left:287px;top:659px;width:100px;height:24px;border:1px solid #8a8a8a;background:#eeeeee"></div>
<div class="t" style="left:288px;top:664px;font-weight:bold;font-size:13px;letter-spacing:0.6px;color:#222">300.00</div>
<div style="left:525px;top:659px;width:100px;height:24px;border:1px solid #8a8a8a;background:#eeeeee"></div>
<div class="t" style="left:526px;top:664px;font-weight:bold;font-size:13px;letter-spacing:0.6px;color:#222">300.00</div>
<div style="left:670px;top:659px;width:100px;height:24px;border:1px solid #8a8a8a;background:#eeeeee"></div>
<div style="left:907px;top:659px;width:100px;height:24px;border:1px solid #8a8a8a;background:#eeeeee"></div>
<div class="t" style="left:908px;top:664px;font-weight:bold;font-size:13px;letter-spacing:0.6px;color:#222">300.00</div>
<div style="left:813px;top:659px;width:89px;height:24px;border:1px solid #b0b0b0;background:#fff"></div>
<div class="t" style="left:842px;top:664px;font-weight:bold;font-size:14px;line-height:16px;color:#222">Total</div>
<div style="left:9px;top:693px;width:1171px;height:25px;border:1px solid #a0a0a0;border-top:2px solid #8c8c8c;background:#fff"></div>
</body></html>
